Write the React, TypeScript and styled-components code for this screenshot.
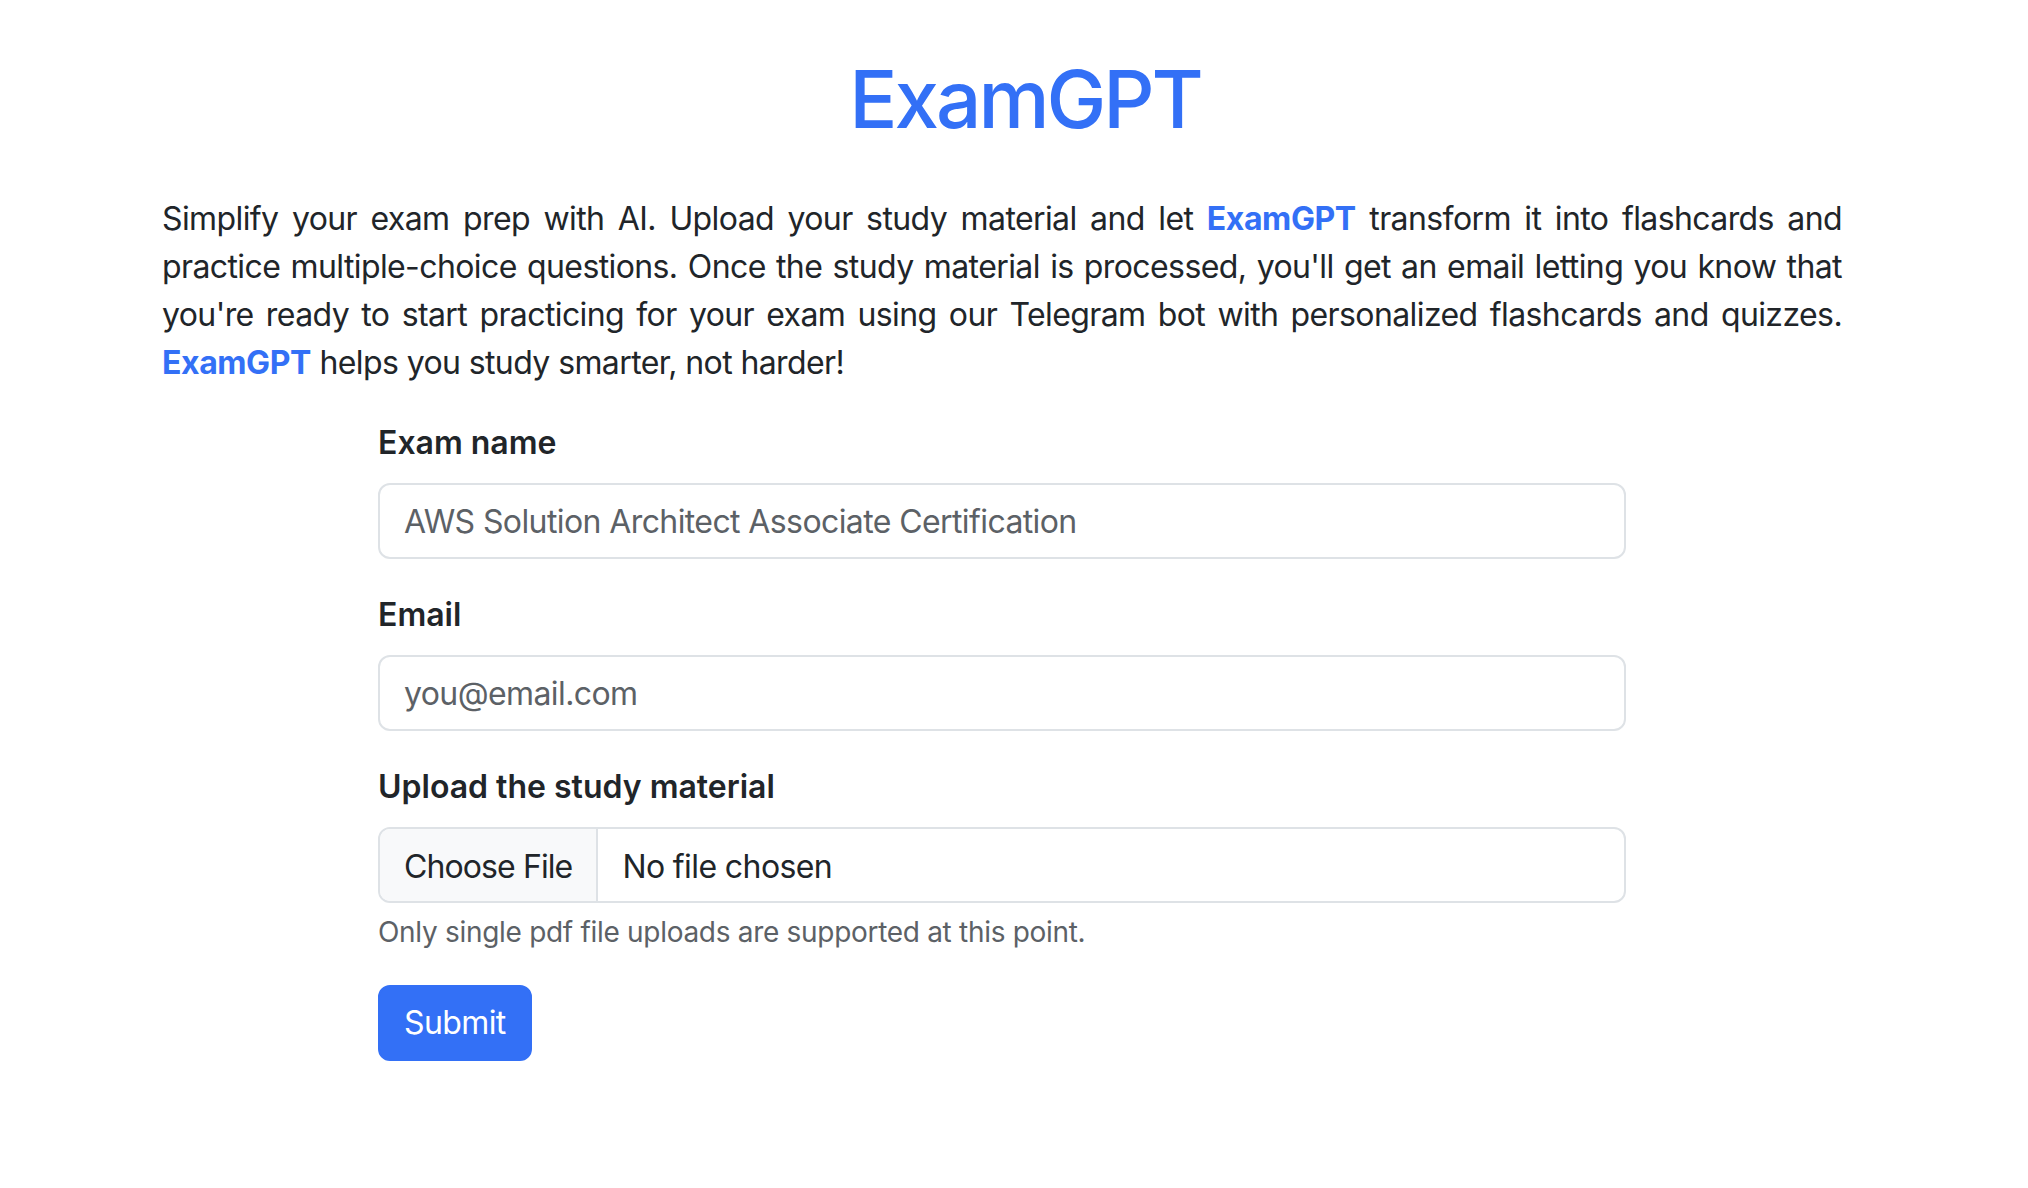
import React, { useState } from 'react';
import styled, { createGlobalStyle } from 'styled-components';

const GlobalStyle = createGlobalStyle`
  html, body {
    margin: 0;
    padding: 0;
    background: #ffffff;
  }
  body {
    font-family: Inter, "Noto Sans", "Liberation Sans", sans-serif;
    color: #212529;
  }
  * {
    box-sizing: border-box;
  }
`;

const Page = styled.main`
  padding: 51px 0 60px 162px;
`;

const Container = styled.div`
  width: 1680px;
`;

const Title = styled.h1`
  margin: 0 0 48px;
  padding-left: 46px;
  font-size: 80px;
  line-height: 96px;
  font-weight: 500;
  letter-spacing: -3px;
  text-align: center;
  color: #3370f6;
`;

const Intro = styled.div`
  margin-bottom: 32px;
  font-size: 32px;
  line-height: 48px;
  letter-spacing: -0.6px;
`;

const Line = styled.div<{ $last?: boolean }>`
  white-space: nowrap;
  text-align: ${(p) => (p.$last ? 'left' : 'justify')};
  text-align-last: ${(p) => (p.$last ? 'left' : 'justify')};
`;

const Brand = styled.strong`
  color: #3370f6;
  font-weight: 700;
  letter-spacing: -0.4px;
`;

const Form = styled.form`
  width: 1248px;
  margin: 0 auto;
`;

const Field = styled.div`
  margin-bottom: 32px;
`;

const Label = styled.label`
  display: block;
  margin-bottom: 16px;
  font-size: 32px;
  line-height: 48px;
  font-weight: 600;
`;

const TextInput = styled.input`
  display: block;
  width: 100%;
  height: 76px;
  padding: 12px 24px;
  font-family: inherit;
  font-size: 32px;
  line-height: 48px;
  letter-spacing: -0.6px;
  color: #212529;
  background: #fff;
  border: 2px solid #dee2e6;
  border-radius: 12px;
  outline: none;

  &::placeholder {
    color: #5c6166;
  }

  &:focus {
    border-color: #86b7fe;
    box-shadow: 0 0 0 8px rgba(13, 110, 253, 0.25);
  }
`;

const FileInput = styled.input`
  display: block;
  width: 100%;
  height: 76px;
  padding: 12px 24px;
  font-family: inherit;
  font-size: 32px;
  line-height: 48px;
  letter-spacing: -0.6px;
  color: #212529;
  background: #fff;
  border: 2px solid #dee2e6;
  border-radius: 12px;
  overflow: hidden;
  outline: none;

  &::file-selector-button {
    height: 76px;
    padding: 12px 24px;
    margin: -12px 24px -12px -24px;
    font-family: inherit;
    font-size: 32px;
    line-height: 48px;
    letter-spacing: -0.9px;
    color: #212529;
    background: #f8f9fa;
    border: 0;
    border-right: 2px solid #dee2e6;
    border-radius: 0;
    pointer-events: none;
  }
`;

const Help = styled.div`
  margin-top: 8px;
  font-size: 28px;
  line-height: 42px;
  letter-spacing: -0.3px;
  color: #5c6166;
`;

const SubmitButton = styled.button`
  height: 76px;
  padding: 12px 24px;
  font-family: inherit;
  font-size: 32px;
  line-height: 48px;
  letter-spacing: -0.6px;
  color: #fff;
  background: #3370f6;
  border: 2px solid #3370f6;
  border-radius: 12px;
  cursor: pointer;

  &:hover {
    background: #2a62dd;
  }
`;

const App = () => {
  const [examName, setExamName] = useState('');
  const [email, setEmail] = useState('');

  return (
    <>
      <GlobalStyle />
      <Page>
        <Container>
          <Title>ExamGPT</Title>
          <Intro>
            <Line>
              Simplify your exam prep with AI. Upload your study material and let{' '}
              <Brand>ExamGPT</Brand> transform it into flashcards and
            </Line>
            <Line>
              practice multiple-choice questions. Once the study material is processed,
              you'll get an email letting you know that
            </Line>
            <Line>
              you're ready to start practicing for your exam using our Telegram bot with
              personalized flashcards and quizzes.
            </Line>
            <Line $last>
              <Brand>ExamGPT</Brand> helps you study smarter, not harder!
            </Line>
          </Intro>

          <Form onSubmit={(e) => e.preventDefault()}>
            <Field>
              <Label htmlFor="examName">Exam name</Label>
              <TextInput
                id="examName"
                type="text"
                placeholder="AWS Solution Architect Associate Certification"
                value={examName}
                onChange={(e) => setExamName(e.target.value)}
              />
            </Field>
            <Field>
              <Label htmlFor="email">Email</Label>
              <TextInput
                id="email"
                type="email"
                placeholder="you@email.com"
                value={email}
                onChange={(e) => setEmail(e.target.value)}
              />
            </Field>
            <Field>
              <Label htmlFor="material">Upload the study material</Label>
              <FileInput id="material" type="file" accept="application/pdf" />
              <Help>Only single pdf file uploads are supported at this point.</Help>
            </Field>
            <SubmitButton type="submit">Submit</SubmitButton>
          </Form>
        </Container>
      </Page>
    </>
  );
};

export default App;
